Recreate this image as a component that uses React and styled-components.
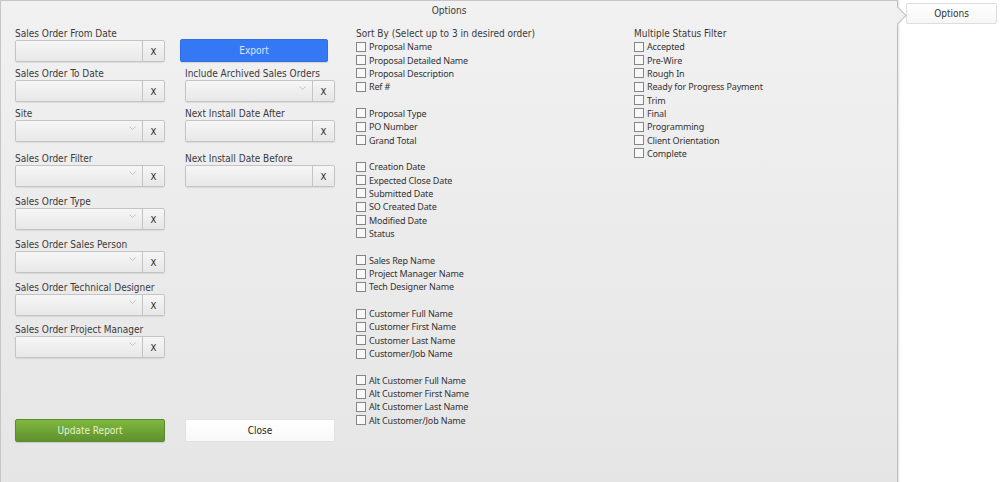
import React from "react";
import styled, { createGlobalStyle } from "styled-components";

const GlobalStyle = createGlobalStyle`
  html, body { margin: 0; padding: 0; background: #fff; }
  body {
    font-family: "DejaVu Sans Condensed", "DejaVu Sans", sans-serif;
    font-stretch: semi-condensed;
    color: #333;
  }
  * { box-sizing: border-box; }
`;

const labelFont = `
  font-family: "DejaVu Sans Condensed", "DejaVu Sans", sans-serif;
  font-stretch: semi-condensed;
  font-size: 10px;
`;

const checkFont = `
  font-family: "Noto Sans", "Open Sans", sans-serif;
  font-size: 9px;
  letter-spacing: -0.15px;
`;

const Page = styled.div`
  display: flex;
  align-items: flex-start;
  width: 1000px;
  height: 482px;
  overflow: hidden;
`;

const Panel = styled.section`
  position: relative;
  width: 898px;
  height: 500px;
  flex: none;
  border: 1px solid #c6c6c6;
  border-right-color: #bdbdbd;
  background: linear-gradient(#f1f1f1, #e5e5e5);
  box-shadow: 1px 0 2px rgba(0, 0, 0, 0.12);
`;

const Arrow = styled.div`
  position: absolute;
  right: -7px;
  top: 8px;
  width: 13px;
  height: 13px;
  transform: rotate(45deg);
  background: #f0f0f0;
  border-top: 1px solid #c2c2c2;
  border-right: 1px solid #c2c2c2;
`;

const Title = styled.div`
  ${labelFont}
  height: 19px;
  line-height: 19px;
  text-align: center;
  color: #3a3a3a;
`;

const Body = styled.div`
  display: flex;
  align-items: flex-start;
  padding: 7px 0 0 14px;
`;

const FormArea = styled.div`
  display: flex;
  flex-direction: column;
  width: 320px;
  flex: none;
`;

const FieldsGrid = styled.div`
  display: grid;
  grid-template-columns: 150px 150px;
  column-gap: 20px;
  align-items: start;
`;

const Col = styled.div`
  display: flex;
  flex-direction: column;
`;

const Label = styled.div`
  ${labelFont}
  height: 13px;
  line-height: 13px;
  color: #3a3a3a;
  white-space: nowrap;
`;

const FieldWrap = styled.div`
  display: flex;
  flex-direction: column;
  margin-bottom: ${(p) => p.$gap}px;
`;

const InputGroup = styled.div`
  display: flex;
  height: 22px;
  border: 1px solid #c4c4c4;
  border-radius: 2px;
  box-shadow: 0 1px 1px rgba(0, 0, 0, 0.08);
  overflow: hidden;
`;

const InputBox = styled.div`
  position: relative;
  flex: 1;
  background: linear-gradient(#f6f6f6, #e8e8e8);
`;

const Chevron = styled.svg`
  position: absolute;
  right: 6px;
  top: 5px;
`;

const ClearButton = styled.div`
  width: 22px;
  flex: none;
  border-left: 1px solid #c4c4c4;
  background: linear-gradient(#f6f6f6, #e7e7e7);
  display: flex;
  align-items: center;
  justify-content: center;
  font-family: "DejaVu Sans", sans-serif;
  font-size: 9.5px;
  color: #222;
  padding-top: 1px;
`;

const Button = styled.div`
  ${labelFont}
  display: flex;
  align-items: center;
  justify-content: center;
  height: 23px;
  width: ${(p) => p.$w || 150}px;
  border-radius: 2px;
  border: 1px solid ${(p) =>
    p.$variant === "blue" ? "#2f6fe6" : p.$variant === "green" ? "#5a8a2d" : "#e2e2e2"};
  background: ${(p) =>
    p.$variant === "blue"
      ? "#3478f6"
      : p.$variant === "green"
      ? "linear-gradient(#7fb83f, #5f912e)"
      : "linear-gradient(#ffffff, #f8f8f8)"};
  color: ${(p) =>
    p.$variant === "blue" ? "#d6e4ff" : p.$variant === "green" ? "#e4f2cf" : "#222"};
  box-shadow: ${(p) => (p.$variant === "white" ? "none" : "0 1px 1px rgba(0,0,0,0.12)")};
`;

const ExportWrap = styled.div`
  margin: 12px 0 5px -5px;
`;

const ButtonRow = styled.div`
  display: flex;
  gap: 20px;
  margin-top: 61px;
`;

const CheckColumn = styled.div`
  display: flex;
  flex-direction: column;
  width: ${(p) => p.$w}px;
  margin-left: ${(p) => p.$ml}px;
  flex: none;
`;

const Heading = styled.div`
  ${labelFont}
  height: 13px;
  line-height: 13px;
  color: #3a3a3a;
  white-space: nowrap;
`;

const Group = styled.div`
  display: flex;
  flex-direction: column;
  & + & { margin-top: 13.35px; }
`;

const CheckRow = styled.label`
  ${checkFont}
  display: flex;
  align-items: center;
  gap: 3px;
  height: 13.35px;
  color: #333;
  white-space: nowrap;
`;

const Box = styled.span`
  width: 10px;
  height: 10px;
  border: 1px solid #858585;
  background: #f8f8f8;
  flex: none;
`;

const TabArea = styled.div`
  margin: 3px 0 0 8px;
`;

const Tab = styled.div`
  ${labelFont}
  width: 91px;
  height: 21px;
  display: flex;
  align-items: center;
  justify-content: center;
  border: 1px solid #dedede;
  border-radius: 2px;
  background: linear-gradient(#ffffff, #f6f6f6);
  color: #333;
`;

function Field({ label, select, gap }) {
  return (
    <FieldWrap $gap={gap}>
      <Label>{label}</Label>
      <InputGroup>
        <InputBox>
          {select && (
            <Chevron width="7" height="4" viewBox="0 0 7 4">
              <polyline points="0.5,0.5 3.5,3.5 6.5,0.5" fill="none" stroke="#bdbdbd" strokeWidth="0.9" />
            </Chevron>
          )}
        </InputBox>
        <ClearButton>X</ClearButton>
      </InputGroup>
    </FieldWrap>
  );
}

const sortGroups = [
  ["Proposal Name", "Proposal Detailed Name", "Proposal Description", "Ref #"],
  ["Proposal Type", "PO Number", "Grand Total"],
  ["Creation Date", "Expected Close Date", "Submitted Date", "SO Created Date", "Modified Date", "Status"],
  ["Sales Rep Name", "Project Manager Name", "Tech Designer Name"],
  ["Customer Full Name", "Customer First Name", "Customer Last Name", "Customer/Job Name"],
  ["Alt Customer Full Name", "Alt Customer First Name", "Alt Customer Last Name", "Alt Customer/Job Name"],
];

const statuses = [
  "Accepted",
  "Pre-Wire",
  "Rough In",
  "Ready for Progress Payment",
  "Trim",
  "Final",
  "Programming",
  "Client Orientation",
  "Complete",
];

function Check({ children }) {
  return (
    <CheckRow>
      <Box />
      {children}
    </CheckRow>
  );
}

export default function App() {
  return (
    <>
      <GlobalStyle />
      <Page>
        <Panel>
          <Arrow />
          <Title>Options</Title>
          <Body>
            <FormArea>
              <FieldsGrid>
                <Col>
                  <Field label="Sales Order From Date" gap={5} />
                  <Field label="Sales Order To Date" gap={5} />
                  <Field label="Site" select gap={10} />
                  <Field label="Sales Order Filter" select gap={8} />
                  <Field label="Sales Order Type" select gap={8} />
                  <Field label="Sales Order Sales Person" select gap={8} />
                  <Field label="Sales Order Technical Designer" select gap={7} />
                  <Field label="Sales Order Project Manager" select gap={0} />
                </Col>
                <Col>
                  <ExportWrap>
                    <Button $variant="blue" $w={148}>Export</Button>
                  </ExportWrap>
                  <Field label="Include Archived Sales Orders" select gap={5} />
                  <Field label="Next Install Date After" gap={10} />
                  <Field label="Next Install Date Before" gap={0} />
                </Col>
              </FieldsGrid>
              <ButtonRow>
                <Button $variant="green">Update Report</Button>
                <Button $variant="white">Close</Button>
              </ButtonRow>
            </FormArea>
            <CheckColumn $w={278} $ml={21}>
              <Heading>Sort By (Select up to 3 in desired order)</Heading>
              {sortGroups.map((g, i) => (
                <Group key={i}>
                  {g.map((item) => (
                    <Check key={item}>{item}</Check>
                  ))}
                </Group>
              ))}
            </CheckColumn>
            <CheckColumn $w={200} $ml={0}>
              <Heading>Multiple Status Filter</Heading>
              <Group>
                {statuses.map((s) => (
                  <Check key={s}>{s}</Check>
                ))}
              </Group>
            </CheckColumn>
          </Body>
        </Panel>
        <TabArea>
          <Tab>Options</Tab>
        </TabArea>
      </Page>
    </>
  );
}
